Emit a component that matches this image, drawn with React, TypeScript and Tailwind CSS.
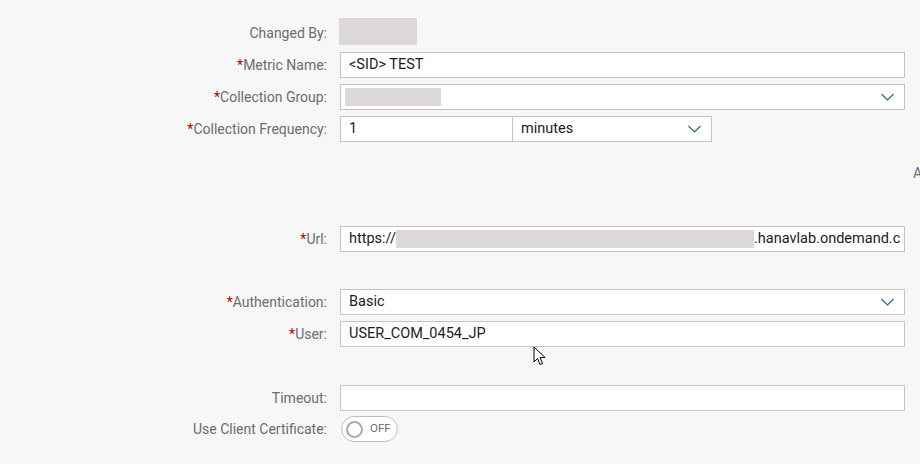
import { ReactNode } from 'react';

const FONT = { fontFamily: 'Roboto, "Liberation Sans", Arial, sans-serif' };

function Label({ text, required }: { text: string; required?: boolean }) {
  return (
    <div className="w-[327px] shrink-0 text-right text-[14px] text-[#6a6d70] leading-none">
      {required && <span className="text-[#bb0000]">*</span>}
      {text}
    </div>
  );
}

function Chevron() {
  return (
    <svg width="13" height="8" viewBox="0 0 13 8" className="shrink-0">
      <polyline points="0.5,1 6.5,7 12.5,1" fill="none" stroke="#346187" strokeWidth="1.2" />
    </svg>
  );
}

function Row({ children, className = '' }: { children: ReactNode; className?: string }) {
  return <div className={`flex items-center ${className}`}>{children}</div>;
}

function Field({ children, className = '' }: { children?: ReactNode; className?: string }) {
  return (
    <div
      className={`ml-[13px] h-[26px] bg-white border border-[#c4c4c4] flex items-center pl-2 text-[14.5px] text-[#1b1b1b] overflow-hidden whitespace-nowrap ${className}`}
    >
      {children}
    </div>
  );
}

export default function App() {
  return (
    <div className="relative w-[920px] h-[464px] bg-[#f7f7f7] overflow-hidden" style={FONT}>
      <div className="flex flex-col pt-[18px]">
        <Row className="h-[27px] pt-[2px]">
          <Label text="Changed By:" />
          <div className="ml-[12px] w-[78px] h-[27px] -mt-[2px] bg-[#ddd8d8]" />
        </Row>

        <Row className="mt-[7px]">
          <Label text="Metric Name:" required />
          <Field className="w-[565px]">&lt;SID&gt; TEST</Field>
        </Row>

        <Row className="mt-[6px]">
          <Label text="Collection Group:" required />
          <Field className="w-[565px] pl-[4px] pr-[10px] justify-between">
            <div className="w-[96px] h-[18px] bg-[#ddd8d8]" />
            <Chevron />
          </Field>
        </Row>

        <Row className="mt-[6px]">
          <Label text="Collection Frequency:" required />
          <Field className="w-[173px]">1</Field>
          <div className="w-[199px] h-[26px] bg-white border border-[#c4c4c4] border-l-0 flex items-center justify-between pl-2 pr-[10px] text-[14.5px] text-[#1b1b1b]">
            <span>minutes</span>
            <Chevron />
          </div>
        </Row>

        <div className="h-[84px] pt-[24px]">
          <span className="block pl-[913px] text-[14px] leading-none text-[#6a6d70]">A</span>
        </div>

        <Row>
          <Label text="Url:" required />
          <Field className="w-[565px]">
            <span>https://</span>
            <div className="w-[358px] h-[18px] bg-[#ddd8d8] shrink-0" />
            <span>.hanavlab.ondemand.c</span>
          </Field>
        </Row>

        <Row className="mt-[37px]">
          <Label text="Authentication:" required />
          <Field className="w-[565px] pr-[10px] justify-between">
            <span>Basic</span>
            <Chevron />
          </Field>
        </Row>

        <Row className="mt-[6px]">
          <Label text="User:" required />
          <Field className="w-[565px]">USER_COM_0454_JP</Field>
        </Row>

        <Row className="mt-[38px]">
          <Label text="Timeout:" />
          <Field className="w-[565px]" />
        </Row>

        <Row className="mt-[5px]">
          <Label text="Use Client Certificate:" />
          <div className="ml-[14px] w-[57px] h-[26px] rounded-full border border-[#bfbfbf] bg-white flex items-center pl-[4px] gap-[7px]">
            <div className="w-[17px] h-[17px] rounded-full border-2 border-[#ababab]" />
            <span className="text-[11.5px] text-[#6a6d70]">OFF</span>
          </div>
        </Row>
      </div>

      <svg className="absolute left-[533px] top-[346px]" width="14" height="22" viewBox="0 0 14 22">
        <path d="M1 1 L1 16 L4.5 12.5 L7 18.5 L9.5 17.5 L7 11.5 L12 11.5 Z" fill="white" stroke="black" strokeWidth="1" />
      </svg>
    </div>
  );
}
